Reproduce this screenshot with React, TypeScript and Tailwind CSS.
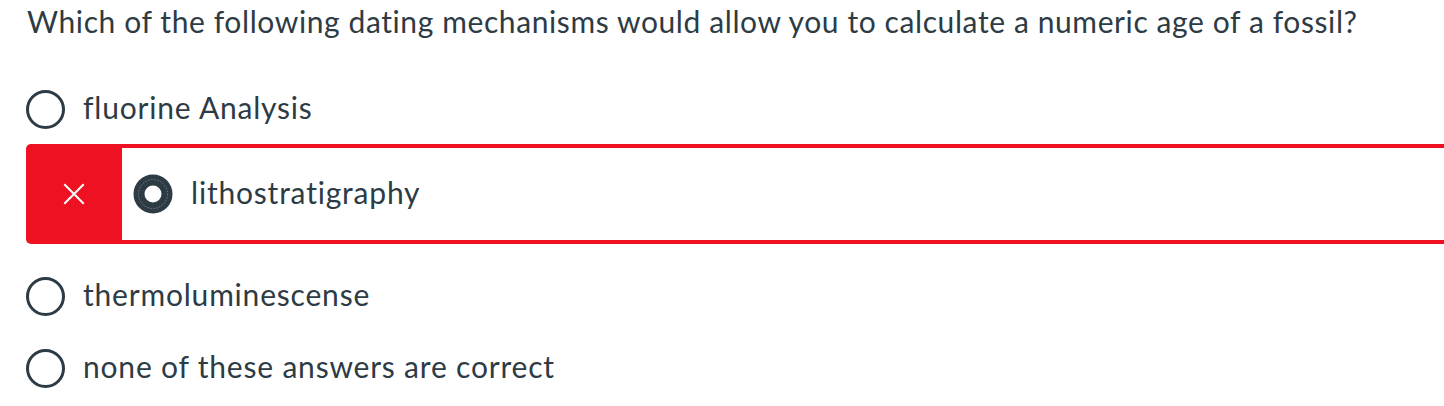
import React from 'react';

const options = [
  { label: 'fluorine Analysis', selected: false },
  { label: 'lithostratigraphy', selected: true },
  { label: 'thermoluminescense', selected: false },
  { label: 'none of these answers are correct', selected: false },
];

function EmptyRadio() {
  return <span className="block h-[39px] w-[39px] shrink-0 rounded-full border-[3px] border-[#2d3b45]" />;
}

function FilledRadio() {
  return (
    <svg width="40" height="40" viewBox="0 0 40 40" className="shrink-0">
      <circle cx="20" cy="20" r="19.5" fill="#2d3b45" />
      <circle cx="20" cy="20" r="8.5" fill="#ffffff" />
      <circle cx="20" cy="20" r="14.5" fill="none" stroke="#8e989f" strokeWidth="0.7" strokeDasharray="1.5 1.5" />
    </svg>
  );
}

function WrongMark() {
  return (
    <svg width="22" height="22" viewBox="0 0 22 22">
      <path d="M2 2 L20 20 M20 2 L2 20" stroke="#ffffff" strokeWidth="2" strokeLinecap="square" />
    </svg>
  );
}

export default function App() {
  return (
    <div className="min-h-screen bg-white pl-[26px] text-[#2d3b45] font-['Lato',_'Liberation_Sans',_sans-serif]">
      <p className="pl-px pt-[3px] text-[30px] leading-[36px] tracking-[0.6px]">
        Which of the following dating mechanisms would allow you to calculate a numeric age of a fossil?
      </p>

      <div className="mt-[50px] flex flex-col tracking-[0.8px]">
        {options.map((opt) =>
          opt.selected ? (
            <div key={opt.label} className="mt-[15px] mb-[32px] flex h-[100px]">
              <div className="flex w-[96px] shrink-0 items-center justify-center rounded-l-[5px] bg-[#ee1122]">
                <WrongMark />
              </div>
              <div className="flex flex-1 items-center gap-[18px] border-y-4 border-[#ee1122] pl-[11px]">
                <FilledRadio />
                <span className="mb-[4px] text-[30px] leading-[36px]">{opt.label}</span>
              </div>
            </div>
          ) : (
            <label key={opt.label} className="flex h-[40px] items-center gap-[18px] [&:nth-child(4)]:mt-[32px]">
              <EmptyRadio />
              <span className="mb-[4px] text-[30px] leading-[36px]">{opt.label}</span>
            </label>
          )
        )}
      </div>
    </div>
  );
}
